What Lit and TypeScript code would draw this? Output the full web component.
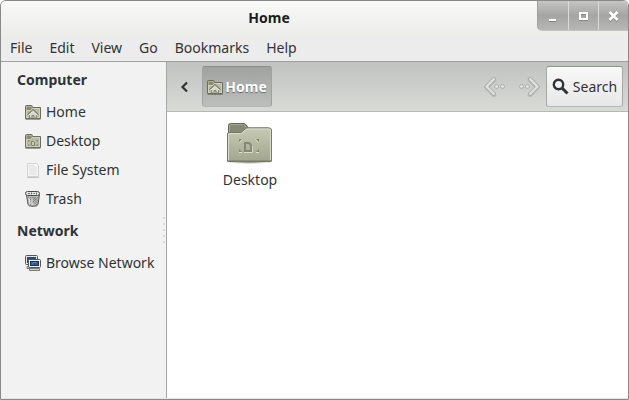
import { LitElement, html, css, svg } from "lit";
import { customElement, property } from "lit/decorators.js";

const smallFolder = svg`
  <path d="M.5 14.500v-12q0-1 1-1h5q.8 0 .8 1l.4 1h7.800v11z" fill="#a9ac93" stroke="#6c6e5a"/>
  <path d="M2 3h4l.6 1.500L5.500 6H2z" fill="#898c73"/>
  <path d="M1.500 13.500v-7h4l2-2h7v9z" fill="#b7baa2" stroke="#d0d2c0"/>
  <path d="M.5 15.500h15" stroke="#47493b" opacity=".5"/>`;

const icons: Record<string, unknown> = {
  home: svg`${smallFolder}
    <path d="M4.500 10v4h2.500v-2.500h2v2.500h2.500v-4L8 7z" fill="#d6d8c9" stroke="#85877a"/>
    <path d="M2.500 10.500L8 5.500l5.500 5" fill="none" stroke="#717363" stroke-width="1"/>
    <path d="M3.500 11.500L8 7.300l4.500 4.200" fill="none" stroke="#f0f1e8" stroke-width="1"/>`,
  desktop: svg`${smallFolder}
    <path d="M6.500 8.500h2l1 1v3h-3z" fill="#c8cbb8" stroke="#7e806c"/>
    <path d="M3.500 8.500v-1h1M11.500 7.500h1v1M3.500 11.500v1h1M11.500 12.500h1v-1" fill="none" stroke="#7b7d69"/>`,
  file: svg`
    <path d="M2.500 1.500h9l2 2v11h-11z" fill="#e9eae8" stroke="#d3d4d1"/>
    <path d="M3.500 2.500h7.500v2h1.500v9h-9z" fill="none" stroke="#f5f5f4"/>
    <path d="M11 2v2h2" fill="none" stroke="#fff"/>
    <path d="M2 15.500h12" stroke="#c4c5c2"/>`,
  trash: svg`
    <path d="M1.500 3.500l1.500 10q.3 1.800 5 1.800t5-1.800l1.500-10z" fill="#bcbdbb" stroke="#555753"/>
    <path d="M3 6l9 8M5 6l8 6M8 6l5 4M13 6l-8 8M11 6l-7 6M8 6l-4 4" stroke="#737572" stroke-width=".7"/>
    <path d="M4 7l1 6M7 7v7" stroke="#f3f3f2" stroke-width=".9"/>
    <rect x=".5" y=".5" width="14" height="4" rx="2" fill="#e4e4e3" stroke="#4b4d4a"/>
    <path d="M3 2.500h2M6.500 1.500v2M8.500 2.500h1.500M11.500 1.500v2" stroke="#6a6c68"/>`,
  network: svg`
    <rect x=".5" y=".5" width="12" height="9" rx="1" fill="#e4e5e2" stroke="#555753"/>
    <rect x="2" y="2" width="9" height="6" fill="#204a87"/>
    <path d="M2 11.500h3v2H2z" fill="#d3d7cf" stroke="#777975"/>
    <rect x="3.500" y="4.500" width="12" height="8" rx="1" fill="#f0f0ee" stroke="#555753"/>
    <rect x="5.500" y="6.500" width="8" height="4" fill="#2a5796" stroke="#16325f"/>
    <path d="M7 9.500l1.500-2h3" stroke="#5e88bd" fill="none"/>
    <path d="M4.500 13.500h10v2h-10z" fill="#d3d7cf" stroke="#777975"/>`,
};

@customElement("small-icon")
class SmallIcon extends LitElement {
  @property() name = "home";
  static styles = css`
    :host { display: block; flex: none; width: 16px; height: 16px; }
    svg { display: block; }
  `;
  render() {
    return html`<svg width="16" height="16" viewBox="0 0 16 16" aria-hidden="true">${icons[this.name]}</svg>`;
  }
}

const places = [
  { title: "Computer", items: [["home", "Home"], ["desktop", "Desktop"], ["file", "File System"], ["trash", "Trash"]] },
  { title: "Network", items: [["network", "Browse Network"]] },
];

const historyArrow = svg`
  <path d="M10 2L2.500 9.500L10 17" fill="none" stroke="#8f938f" stroke-width="4.500" stroke-linecap="round" stroke-linejoin="round" opacity=".35" transform="translate(0 1)"/>
  <path d="M10 2L2.500 9.500L10 17" fill="none" stroke="#abafab" stroke-width="4" stroke-linecap="round" stroke-linejoin="round"/>
  <path d="M10 2L2.500 9.500L10 17" fill="none" stroke="#e0e2e0" stroke-width="2.200" stroke-linecap="round" stroke-linejoin="round"/>
  <circle cx="12.500" cy="9.500" r="2" fill="#e0e2e0" stroke="#abafab"/>
  <circle cx="18.500" cy="9.500" r="2" fill="#e0e2e0" stroke="#abafab"/>`;

@customElement("app-root")
class AppRoot extends LitElement {
  static styles = css`
    :host {
      display: flex; flex-direction: column; box-sizing: border-box; min-height: 100vh;
      border: 1px solid #898989; border-radius: 6px 6px 0 0; overflow: hidden;
      background: #ececec; color: #2e3436;
      font: 14px/20px "Noto Sans", "Open Sans", sans-serif;
    }
    button { font: inherit; color: inherit; border: 0; background: none; margin: 0; padding: 0; }
    svg { display: block; flex: none; }
    a { color: inherit; text-decoration: none; }
    .titlebar { display: flex; height: 36px; background: linear-gradient(#f9f9f8, #ececeb 34px); }
    h1 { flex: 1; margin: 0; padding-top: 7px; text-align: center; font: inherit; font-weight: 700; color: #1c1c1c; }
    .controls {
      display: flex; height: 30px; box-sizing: border-box; overflow: hidden;
      border-left: 1px solid #a0a0a0; border-bottom: 1px solid #c4c4c3; border-radius: 0 0 0 5px;
      background: linear-gradient(#c5c5c4, #a5a5a4 50%, #b7b7b6);
    }
    .controls button { width: 30px; display: grid; place-items: center; }
    .controls button + button { border-left: 1px solid #dcdcdb; }
    .menubar { display: flex; gap: 17px; height: 24px; padding: 0 9px; border-bottom: 1px solid #a1a1a1; }
    .menubar button { padding-bottom: 2px; }
    .body { flex: 1; display: flex; border-bottom: 1px solid #e5e5e5; }
    .sidebar { position: relative; flex: none; width: 165px; background: #f2f2f2; border-right: 1px solid #a4a6a4; }
    h2 { margin: 0; padding: 0 16px; font: inherit; font-weight: 700; line-height: 35px; }
    ul { margin: 0; padding: 0; list-style: none; }
    .place { display: flex; align-items: center; gap: 5px; height: 29px; padding-left: 24px; white-space: nowrap; }
    .grip { position: absolute; right: 0; top: 154px; }
    .main { flex: 1; min-width: 0; display: flex; flex-direction: column; background: #fff; }
    .toolbar {
      display: flex; align-items: center; height: 49px; padding: 0 5px 0 0; border-bottom: 1px solid #b5b8b4;
      background: linear-gradient(#bfc2bf, #d9dbd7);
    }
    .back { width: 35px; height: 41px; display: grid; place-items: center; }
    .crumb, .search {
      display: flex; align-items: center; justify-content: center; height: 41px; box-sizing: border-box;
      border: 1px solid #979a97; border-radius: 3px;
    }
    .crumb {
      width: 70px; gap: 2px; font-weight: 700; color: #fff; text-shadow: 0 1px 1px #646664;
      border-color: #8b8f8b #a0a3a0 #b3b6b3; background: linear-gradient(#9fa29f, #bcbfbc);
    }
    .spacer { flex: 1; }
    .history { width: 34px; height: 41px; display: grid; place-items: center; }
    .flip { transform: scaleX(-1); }
    .search { width: 77px; gap: 4px; border-color: #8e918e #a5a8a5 #b4b7b4; background: linear-gradient(#f8f8f8, #e8e8e8); box-shadow: inset 0 1px #fff; }
    .files { display: flex; flex-wrap: wrap; padding: 6px 30px; }
    .item { width: 106px; display: flex; flex-direction: column; align-items: center; gap: 4px; }
  `;

  render() {
    return html`
      <header class="titlebar">
        <h1>Home</h1>
        <div class="controls">
          <button aria-label="Minimize"><svg width="12" height="12"><path d="M2 11h7" stroke="#858585" stroke-width="2"/><path d="M2 10h7" stroke="#fff" stroke-width="2"/></svg></button>
          <button aria-label="Maximize"><svg width="12" height="12"><path d="M2 4h7v6H2z" fill="none" stroke="#858585" stroke-width="2"/><path d="M2 3h7v6H2z" fill="none" stroke="#fff" stroke-width="2"/></svg></button>
          <button aria-label="Close"><svg width="12" height="12"><path d="M1.500 3l8 8m0-8l-8 8" stroke="#858585" stroke-width="2.500"/><path d="M1.500 2l8 8m0-8l-8 8" stroke="#fff" stroke-width="2.500"/></svg></button>
        </div>
      </header>
      <nav class="menubar" aria-label="Menu">
        ${["File", "Edit", "View", "Go", "Bookmarks", "Help"].map((m) => html`<button>${m}</button>`)}
      </nav>
      <div class="body">
        <aside class="sidebar">
          ${places.map((g) => html`<h2>${g.title}</h2>
            <ul>${g.items.map(([icon, label]) => html`<li><a class="place" href="#"><small-icon name=${icon}></small-icon>${label}</a></li>`)}</ul>`)}
          <svg class="grip" width="3" height="28" aria-hidden="true">
            ${[1, 7, 13, 19, 25].map((y) => svg`<rect x="0" y=${y} width="2" height="2" fill="#dadada"/>`)}
          </svg>
        </aside>
        <main class="main">
          <div class="toolbar">
            <button class="back" aria-label="Scroll path left"><svg width="10" height="12"><path d="M7 1.500L2.500 6L7 10.500" fill="none" stroke="#2e3436" stroke-width="2.200"/></svg></button>
            <button class="crumb"><small-icon name="home"></small-icon>Home</button>
            <span class="spacer"></span>
            <button class="history" aria-label="Back" disabled><svg width="22" height="20">${historyArrow}</svg></button>
            <button class="history" aria-label="Forward" disabled><svg class="flip" width="22" height="20">${historyArrow}</svg></button>
            <button class="search"><svg width="17" height="17" aria-hidden="true"><circle cx="6.500" cy="6.500" r="4.700" fill="none" stroke="#2e3436" stroke-width="2.400"/><path d="M10 10l5.500 5.500" stroke="#2e3436" stroke-width="3"/></svg>Search</button>
          </div>
          <div class="files">
            <a class="item" href="#">
              <svg width="48" height="48" viewBox="0 0 48 48" aria-hidden="true">
                <defs>
                  <linearGradient id="front" x2="0" y2="1"><stop stop-color="#c6c9b5"/><stop offset="1" stop-color="#a3a68e"/></linearGradient>
                  <radialGradient id="shade"><stop stop-color="#000" stop-opacity=".5"/><stop offset="1" stop-color="#000" stop-opacity="0"/></radialGradient>
                </defs>
                <ellipse cx="23" cy="44" rx="24" ry="2" fill="url(#shade)"/>
                <path d="M2.500 42.500V7.500q0-2 2-2h13.500q1.500 0 2.500 2l2 2.500h20q2 0 2 2v30z" fill="#878a73" stroke="#65675a"/>
                <path d="M3.500 14V8q0-1.500 1.500-1.500h12.500q1 0 1.500 1.500l2.500 3h20q2 0 2 1.500v2" fill="none" stroke="#a5a891"/>
                <path d="M1.500 43V16q0-1.500 1.500-1.500h12l4-3.500q1-1 2-1h22q2.500 0 2.500 2v31q0 .5-.5.500H2q-.5 0-.5-.5z" fill="url(#front)" stroke="#777a66"/>
                <path d="M2.500 42V17q0-1.500 1.500-1.500h11.500l4-3.500q1-1 2-1h21.500q1.500 0 1.500 1.500V42" fill="none" stroke="#d9dbcd"/>
                <path d="M2.500 42.500h42" stroke="#8d9079"/>
                <path d="M13 24v-3h3zM30 21h3v3zM13 31v3h3zM33 31v3h-3z" fill="#858873"/>
                <path d="M13 34.500h3M30 34.500h3M13.500 24.500l3-3M32.500 24.500l-3-3" stroke="#dfe1d4"/>
                <path d="M19 33v-8h3q3 0 3 4v4z" fill="none" stroke="#858875" stroke-width="2"/>
                <path d="M18 34.500h8.500V28" fill="none" stroke="#d8dacd"/>
              </svg>
              <span>Desktop</span>
            </a>
          </div>
        </main>
      </div>
    `;
  }
}
